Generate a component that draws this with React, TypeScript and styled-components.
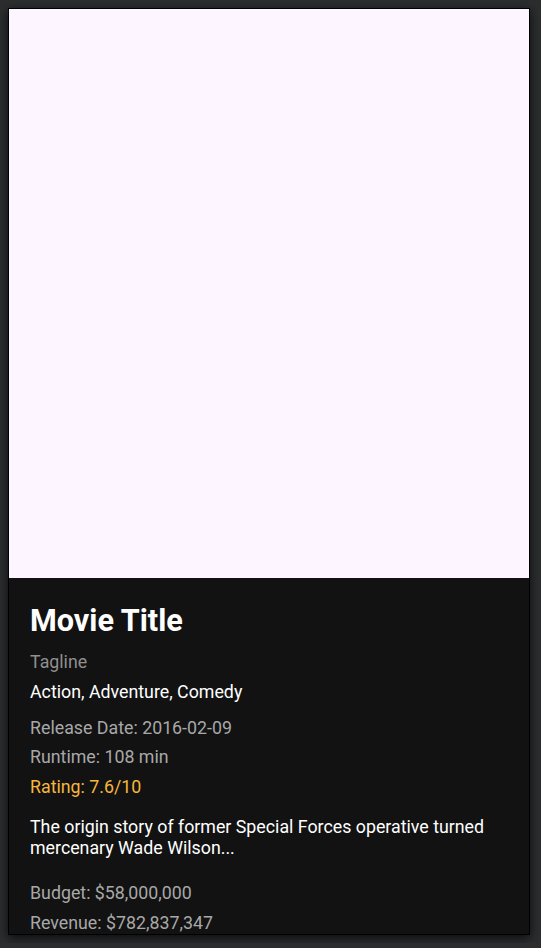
import React, { ReactElement } from 'react';
import styled, { createGlobalStyle } from 'styled-components';

const GlobalStyle = createGlobalStyle`
  html, body {
    margin: 0;
    padding: 0;
    background: #2c2d2f;
  }
  body {
    padding: 8px;
    font-family: Roboto, "Liberation Sans", sans-serif;
  }
`;

interface Movie {
  title: string;
  tagline: string;
  genres: string[];
  releaseDate: string;
  runtime: number;
  rating: number;
  overview: string;
  budget: number;
  revenue: number;
}

const movie: Movie = {
  title: 'Movie Title',
  tagline: 'Tagline',
  genres: ['Action', 'Adventure', 'Comedy'],
  releaseDate: '2016-02-09',
  runtime: 108,
  rating: 7.6,
  overview: 'The origin story of former Special Forces operative turned mercenary Wade Wilson...',
  budget: 58000000,
  revenue: 782837347,
};

const Card = styled.div`
  width: 520px;
  height: 925px;
  border: 1px solid #000;
  background: #121212;
  box-shadow: 0 3px 10px rgba(0, 0, 0, 0.75);
  overflow: hidden;
  display: flex;
  flex-direction: column;
`;

const Poster = styled.div`
  height: 569px;
  flex-shrink: 0;
  background: #fdf5ff;
`;

const Info = styled.div`
  padding: 25px 20px 20px 21px;
  display: flex;
  flex-direction: column;
`;

const Title = styled.h2`
  margin: 0;
  font-size: 30.6px;
  font-weight: 700;
  line-height: 35.2px;
  color: #fff;
`;

interface LineProps {
  $tone: 'muted' | 'dim' | 'light' | 'accent';
  $gap: number;
}

const tones = {
  muted: '#8f8f8f',
  dim: '#a8a8a8',
  light: '#ffffff',
  accent: '#f6b73c',
};

const Line = styled.p<LineProps>`
  margin: ${props => props.$gap}px 0 0;
  font-size: 17.8px;
  line-height: 20.6px;
  color: ${props => tones[props.$tone]};
`;

const Overview = styled.p`
  margin: 20px 0 0;
  font-size: 17.8px;
  line-height: 20.7px;
  color: #fff;
`;

const money = (n: number): string => '$' + n.toLocaleString('en-US');

const App = (): ReactElement => {
  return (
    <>
      <GlobalStyle />
      <Card>
        <Poster />
        <Info>
          <Title>{movie.title}</Title>
          <Line $tone='muted' $gap={14}>{movie.tagline}</Line>
          <Line $tone='light' $gap={9.4}>{movie.genres.join(', ')}</Line>
          <Line $tone='dim' $gap={15}>Release Date: {movie.releaseDate}</Line>
          <Line $tone='dim' $gap={8.8}>Runtime: {movie.runtime} min</Line>
          <Line $tone='accent' $gap={8.8}>Rating: {movie.rating}/10</Line>
          <Overview>{movie.overview}</Overview>
          <Line $tone='dim' $gap={24.6}>Budget: {money(movie.budget)}</Line>
          <Line $tone='dim' $gap={8.8}>Revenue: {money(movie.revenue)}</Line>
        </Info>
      </Card>
    </>
  );
}

export default App;
